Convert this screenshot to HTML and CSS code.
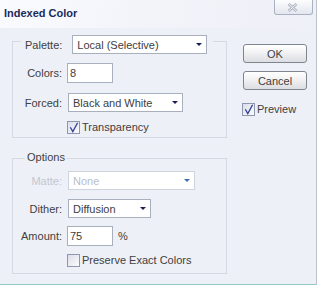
FILE: index.html
```html
<!DOCTYPE html>
<html>
<head>
<meta charset="utf-8">
<link rel="stylesheet" href="styles.css">
</head>
<body>
<div class="window">
  <div class="titlebar">
    <div class="title">Indexed Color</div>
    <div class="close">
      <svg width="11" height="9" viewBox="0 0 11 9"><path d="M1.5 1 L9.5 8 M9.5 1 L1.5 8" stroke="#b0b5c2" stroke-width="2.8" fill="none"/><path d="M1.5 1 L9.5 8 M9.5 1 L1.5 8" stroke="#f3f4f8" stroke-width="1" fill="none"/></svg>
    </div>
  </div>
  <div class="main">
    <div class="left">
      <div class="group group-palette">
        <div class="group-head head-palette">
          <span>Palette:</span>
          <div class="select w-palette"><span>Local (Selective)</span><i class="arrow"></i></div>
        </div>
        <div class="row r-colors"><span class="label">Colors:</span><div class="input">8</div></div>
        <div class="row r-forced"><span class="label">Forced:</span><div class="select w-forced"><span>Black and White</span><i class="arrow"></i></div></div>
        <div class="check-row r-trans">
          <span class="check"><svg width="11" height="11" viewBox="0 0 11 11"><path d="M2.3 5.2 L4.8 9.6 L9.6 0.8" stroke="#34409a" stroke-width="1.3" fill="none"/></svg></span>
          <span>Transparency</span>
        </div>
      </div>
      <div class="group group-options">
        <div class="group-head head-options">Options</div>
        <div class="row r-matte disabled"><span class="label">Matte:</span><div class="select w-matte"><span>None</span><i class="arrow"></i></div></div>
        <div class="row r-dither"><span class="label">Dither:</span><div class="select w-dither"><span>Diffusion</span><i class="arrow"></i></div></div>
        <div class="row r-amount"><span class="label">Amount:</span><div class="input">75</div><span>%</span></div>
        <div class="check-row r-preserve">
          <span class="check"></span>
          <span>Preserve Exact Colors</span>
        </div>
      </div>
    </div>
    <div class="right">
      <div class="btn btn-ok">OK</div>
      <div class="btn btn-cancel">Cancel</div>
      <div class="check-row r-preview">
        <span class="check"><svg width="11" height="11" viewBox="0 0 11 11"><path d="M2.3 5.2 L4.8 9.6 L9.6 0.8" stroke="#34409a" stroke-width="1.3" fill="none"/></svg></span>
        <span>Preview</span>
      </div>
    </div>
  </div>
</div>
</body>
</html>
```
FILE: styles.css
```css
* { box-sizing: border-box; }
body {
  margin: 0;
  background: #ffffff;
  font-family: "Liberation Sans", Arial, sans-serif;
  font-size: 11px;
  color: #404040;
}
.window {
  width: 317px;
  height: 285px;
  background: #eef0f7;
  border-right: 1px solid #bcc3ce;
  border-bottom: 1px solid #90c6c3;
  box-shadow: 0 1px 0 #808790;
  display: flex;
  flex-direction: column;
}
.titlebar {
  height: 28px;
  display: flex;
  justify-content: space-between;
  align-items: flex-start;
  padding: 0 3px 0 4px;
  background: linear-gradient(100deg, #fafbfe 0%, #f3f4fa 45%, #eef0f7 100%);
}
.title {
  margin-top: 7px;
  line-height: 13px;
  font-weight: bold;
  color: #1b2a5c;
}
.close {
  width: 39px;
  height: 15px;
  border: 1px solid #a9b1c1;
  border-top: none;
  border-radius: 0 0 3px 3px;
  background: linear-gradient(#fdfdfe, #e3e6ee);
  display: flex;
  align-items: center;
  justify-content: center;
  padding-right: 3px;
}
.main {
  display: grid;
  grid-template-columns: 215px 64px;
  column-gap: 16px;
  padding-left: 12px;
  align-items: start;
}
.left { display: flex; flex-direction: column; }
.group {
  border: 1px solid #d6d9e2;
  display: flex;
  flex-direction: column;
  align-items: flex-start;
}
.group-palette { margin-top: 13px; padding-bottom: 3px; }
.group-options { margin-top: 20px; padding-bottom: 6px; }
.group-head { background: #eef0f7; }
.head-palette {
  display: flex;
  align-items: center;
  gap: 10px;
  margin: -7px 0 0 8px;
  padding: 0 6px 0 4px;
}
.head-options {
  margin: -8px 0 0 12px;
  padding: 0 2px;
  line-height: 13px;
}
.row { display: flex; align-items: center; gap: 5px; }
.label { width: 49px; text-align: right; }
.r-colors { margin-top: 9px; }
.r-forced { margin-top: 10px; }
.r-matte { margin-top: 7px; }
.r-dither { margin-top: 9px; }
.r-amount { margin-top: 8px; }
.check-row { display: flex; align-items: center; gap: 2px; line-height: 13px; }
.r-trans { margin: 9px 0 0 54px; }
.r-preserve { margin: 8px 0 0 54px; }
.select {
  height: 19px;
  background: #ffffff;
  border: 1px solid #a9b0bd;
  display: flex;
  align-items: center;
  justify-content: space-between;
  padding: 0 4px;
}
.arrow {
  width: 0;
  height: 0;
  border-left: 3px solid transparent;
  border-right: 3px solid transparent;
  border-top: 3px solid #1a1f5c;
}
.w-palette { width: 135px; }
.w-forced { width: 115px; margin-left: 1px; }
.w-matte { width: 127px; margin-left: 1px; }
.w-dither { width: 83px; margin-left: 1px; }
.input {
  width: 46px;
  height: 20px;
  background: #ffffff;
  border: 1px solid #a9b0bd;
  padding-left: 2px;
  line-height: 18px;
}
.disabled .label { color: #c2c6d2; }
.disabled .select { border-color: #cfd3dd; color: #b9bdc9; }
.disabled .arrow { border-top-color: #3c6cb2; }
.check {
  width: 13px;
  height: 13px;
  border: 1px solid #8d97ae;
  background: linear-gradient(135deg, #dadee9, #fbfcfe);
  display: flex;
  align-items: center;
  justify-content: center;
}
.right { display: flex; flex-direction: column; }
.btn {
  height: 19px;
  border: 1px solid #80868f;
  border-radius: 3px;
  background: linear-gradient(#ffffff, #f2f2f4 45%, #dcdde2);
  display: flex;
  align-items: center;
  justify-content: center;
  color: #404040;
}
.btn-ok { margin-top: 16px; }
.btn-cancel { margin-top: 8px; }
.r-preview { margin: 13px 0 0 -1px; }
```
